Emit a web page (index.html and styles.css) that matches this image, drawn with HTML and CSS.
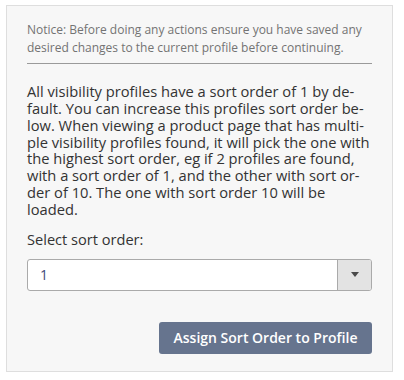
FILE: index.html
```html
<!DOCTYPE html>
<html lang="en">
<head>
<meta charset="utf-8">
<title>Sort order</title>
<link rel="stylesheet" href="styles.css">
</head>
<body>
<div class="panel">
  <p class="notice">Notice: Before doing any actions ensure you have saved any desired changes to the current profile before continuing.</p>
  <div class="rule"></div>
  <p class="desc">All visibility profiles have a sort order of 1 by de&shy;fault. You can increase this profiles sort order be&shy;low. When viewing a product page that has multi&shy;ple visibility profiles found, it will pick the one with the highest sort order, eg if 2 profiles are found, with a sort order of 1, and the other with sort or&shy;der of 10. The one with sort order 10 will be loaded.</p>
  <label class="label">Select sort order:</label>
  <div class="select">
    <span class="select-value">1</span>
    <span class="select-arrow"><span class="caret"></span></span>
  </div>
  <div class="actions">
    <button class="btn">Assign Sort Order to Profile</button>
  </div>
</div>
</body>
</html>
```

FILE: styles.css
```css
html, body {
  margin: 0;
  padding: 0;
  background: #ffffff;
}
body {
  font-family: "Open Sans", "Liberation Sans", sans-serif;
  color: #333333;
}
.panel {
  box-sizing: border-box;
  margin: 5px 0 0 6px;
  width: 387px;
  height: 367px;
  background: #f7f7f7;
  border: 1px solid #dedede;
  padding: 15px 20px 15px 20px;
}
.notice {
  margin: 0;
  font-size: 12px;
  line-height: 18px;
  color: #737373;
}
.rule {
  margin-top: 6px;
  border-top: 1px solid #9a9a9a;
  height: 0;
}
.desc {
  margin: 19px 0 0 0;
  font-size: 14.7px;
  line-height: 16.85px;
  color: #333333;
}
.label {
  display: block;
  margin-top: 11px;
  font-size: 14.6px;
  line-height: 20px;
  color: #333333;
}
.select {
  margin-top: 10px;
  height: 32px;
  box-sizing: border-box;
  display: flex;
  border: 1px solid #aaaaaa;
  border-radius: 3px;
  background: #ffffff;
  overflow: hidden;
}
.select-value {
  flex: 1;
  padding-left: 12px;
  font-size: 14px;
  line-height: 30px;
  color: #3d4a7a;
}
.select-arrow {
  width: 33px;
  background: #e3e3e3;
  border-left: 1px solid #aaaaaa;
  display: flex;
  align-items: center;
  justify-content: center;
}
.caret {
  width: 0;
  height: 0;
  border-left: 4px solid transparent;
  border-right: 4px solid transparent;
  border-top: 5px solid #4a4a4a;
}
.actions {
  display: flex;
  justify-content: flex-end;
  margin-top: 31px;
}
.btn {
  height: 32px;
  width: 213px;
  border: none;
  border-radius: 3px;
  background: #66748e;
  color: #ffffff;
  font-family: "Open Sans", "Liberation Sans", sans-serif;
  font-weight: 600;
  font-size: 14px;
  padding: 0;
}
```
